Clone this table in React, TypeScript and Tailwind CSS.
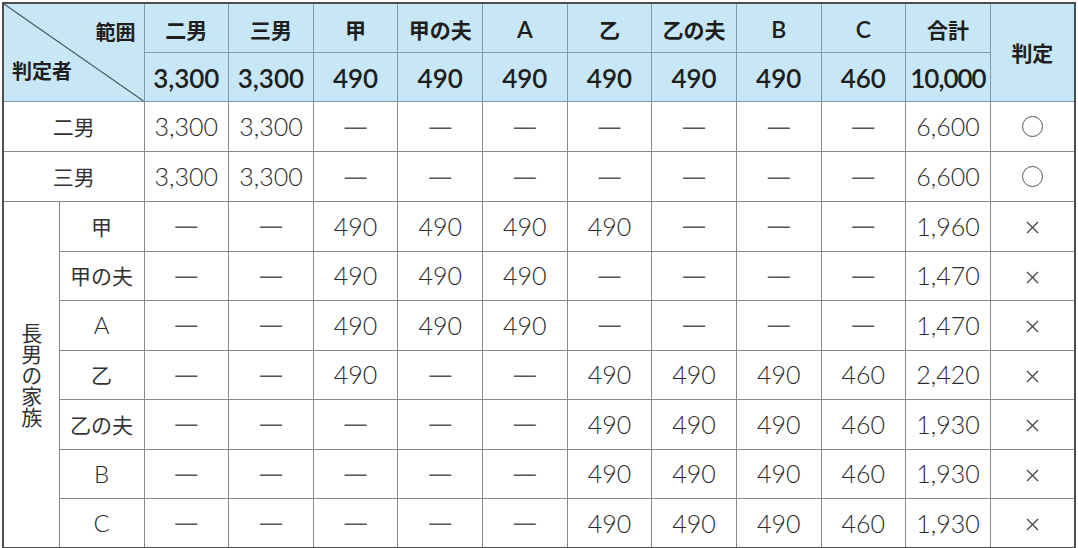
const FONT = { fontFamily: 'Lato, "Liberation Sans", "Noto Sans CJK JP", sans-serif' };

const heads = ['二男', '三男', '甲', '甲の夫', 'A', '乙', '乙の夫', 'B', 'C', '合計'];
const shares = ['3,300', '3,300', '490', '490', '490', '490', '490', '490', '460', '10,000'];

type Row = { name: string; cells: string[]; total: string; mark: 'o' | 'x' };

const D = '—';

const top: Row[] = [
  { name: '二男', cells: ['3,300', '3,300', D, D, D, D, D, D, D], total: '6,600', mark: 'o' },
  { name: '三男', cells: ['3,300', '3,300', D, D, D, D, D, D, D], total: '6,600', mark: 'o' },
];

const family: Row[] = [
  { name: '甲', cells: [D, D, '490', '490', '490', '490', D, D, D], total: '1,960', mark: 'x' },
  { name: '甲の夫', cells: [D, D, '490', '490', '490', D, D, D, D], total: '1,470', mark: 'x' },
  { name: 'A', cells: [D, D, '490', '490', '490', D, D, D, D], total: '1,470', mark: 'x' },
  { name: '乙', cells: [D, D, '490', D, D, '490', '490', '490', '460'], total: '2,420', mark: 'x' },
  { name: '乙の夫', cells: [D, D, D, D, D, '490', '490', '490', '460'], total: '1,930', mark: 'x' },
  { name: 'B', cells: [D, D, D, D, D, '490', '490', '490', '460'], total: '1,930', mark: 'x' },
  { name: 'C', cells: [D, D, D, D, D, '490', '490', '490', '460'], total: '1,930', mark: 'x' },
];

const cell = 'border border-[#8a8a8a] text-center align-middle p-0';
const headCell = 'border border-[#7f9aa8] bg-[#c7e7f7] text-center align-middle p-0 text-[#1e1e1e]';

function Value({ v }: { v: string }) {
  if (v === D)
    return <span className="text-[22px] text-[#555] font-['Liberation_Sans',sans-serif]">—</span>;
  return <span className="text-[25px] font-light text-[#2a2a2a]">{v}</span>;
}

function Mark({ m }: { m: 'o' | 'x' }) {
  if (m === 'o')
    return <span className="inline-block w-[21px] h-[21px] rounded-full border-[1.5px] border-[#555] align-middle" />;
  return (
    <svg className="inline-block align-middle" width="13" height="13" viewBox="0 0 13 13">
      <path d="M1 1 L12 12 M12 1 L1 12" stroke="#444" strokeWidth="1.3" fill="none" />
    </svg>
  );
}

function Label({ t }: { t: string }) {
  const latin = /^[A-Z]$/.test(t);
  return (
    <span className={latin ? 'text-[24px] font-light text-[#2a2a2a]' : 'text-[21px] text-[#333]'}>{t}</span>
  );
}

function DataCells({ r }: { r: Row }) {
  return (
    <>
      {r.cells.map((v, i) => (
        <td key={i} className={cell}>
          <Value v={v} />
        </td>
      ))}
      <td className={cell}>
        <Value v={r.total} />
      </td>
      <td className={cell}>
        <Mark m={r.mark} />
      </td>
    </>
  );
}

export default function App() {
  return (
    <div className="w-[1078px] h-[548px] bg-white pl-[2px] pt-[2px]" style={FONT}>
      <table className="table-fixed border-collapse border-2 border-[#4d4d4d] w-[1074px] leading-none">
        <colgroup>
          <col className="w-[56px]" />
          <col className="w-[85px]" />
          {Array.from({ length: 11 }).map((_, i) => (
            <col key={i} />
          ))}
        </colgroup>
        <thead>
          <tr className="h-[49px]">
            <th colSpan={2} rowSpan={2} className={`${headCell} relative`}>
              <svg className="absolute inset-0 w-full h-full" preserveAspectRatio="none" viewBox="0 0 100 100">
                <line x1="0" y1="0" x2="100" y2="100" stroke="#4a5a64" strokeWidth="1.2" vectorEffect="non-scaling-stroke" />
              </svg>
              <div className="relative flex flex-col h-[97px] px-[8px] font-bold text-[20px]">
                <div className="flex-1 flex items-center justify-end pt-[8px]">範囲</div>
                <div className="flex-1 flex items-center justify-start pb-[10px]">判定者</div>
              </div>
            </th>
            {heads.map((h) => (
              <th key={h} className={`${headCell} font-bold ${/^[A-Z]$/.test(h) ? 'text-[23px] font-semibold' : 'text-[21px]'}`}>
                <span className="relative top-[2px]">{h}</span>
              </th>
            ))}
            <th rowSpan={2} className={`${headCell} font-bold text-[21px]`}>
              判定
            </th>
          </tr>
          <tr className="h-[49px]">
            {shares.map((s, i) => (
              <th
                key={i}
                className={`${headCell} font-semibold text-[26px] ${s === '10,000' ? 'tracking-[-1px]' : ''}`}
              >
                <span className="relative top-[1px]">{s}</span>
              </th>
            ))}
          </tr>
        </thead>
        <tbody>
          {top.map((r) => (
            <tr key={r.name} className="h-[50px]">
              <td colSpan={2} className={cell}>
                <Label t={r.name} />
              </td>
              <DataCells r={r} />
            </tr>
          ))}
          {family.map((r, idx) => (
            <tr key={r.name} className="h-[49.5px]">
              {idx === 0 && (
                <td rowSpan={family.length} className={cell}>
                  <span className="inline-block [writing-mode:vertical-rl] [text-orientation:upright] text-[21px] leading-none text-[#333] mt-[4px]">
                    長男の家族
                  </span>
                </td>
              )}
              <td className={cell}>
                <Label t={r.name} />
              </td>
              <DataCells r={r} />
            </tr>
          ))}
        </tbody>
      </table>
    </div>
  );
}
